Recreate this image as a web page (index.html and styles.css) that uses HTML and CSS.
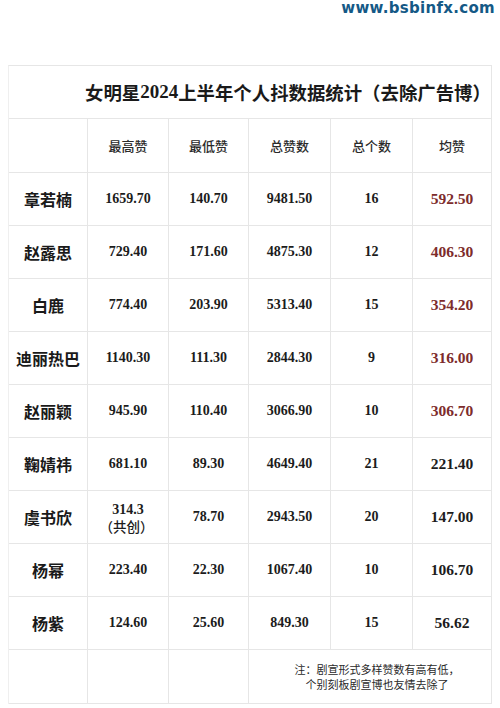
FILE: index.html
```html
<!DOCTYPE html>
<html lang="zh">
<head>
<meta charset="utf-8">
<link rel="stylesheet" href="styles.css">
</head>
<body>
<div class="top">
  <div class="mark">www.bsbinfx.com</div>
</div>
<div class="table">
  <div class="title">女明星<span class="num">2024</span>上半年个人抖数据统计（去除广告博）</div>
  <div class="c"></div>
  <div class="c h">最高赞</div>
  <div class="c h">最低赞</div>
  <div class="c h">总赞数</div>
  <div class="c h">总个数</div>
  <div class="c h">均赞</div>

  <div class="c n">章若楠</div><div class="c v">1659.70</div><div class="c v">140.70</div><div class="c v">9481.50</div><div class="c v">16</div><div class="c a red">592.50</div>
  <div class="c n">赵露思</div><div class="c v">729.40</div><div class="c v">171.60</div><div class="c v">4875.30</div><div class="c v">12</div><div class="c a red">406.30</div>
  <div class="c n">白鹿</div><div class="c v">774.40</div><div class="c v">203.90</div><div class="c v">5313.40</div><div class="c v">15</div><div class="c a red">354.20</div>
  <div class="c n">迪丽热巴</div><div class="c v">1140.30</div><div class="c v">111.30</div><div class="c v">2844.30</div><div class="c v">9</div><div class="c a red">316.00</div>
  <div class="c n">赵丽颖</div><div class="c v">945.90</div><div class="c v">110.40</div><div class="c v">3066.90</div><div class="c v">10</div><div class="c a red">306.70</div>
  <div class="c n">鞠婧祎</div><div class="c v">681.10</div><div class="c v">89.30</div><div class="c v">4649.40</div><div class="c v">21</div><div class="c a">221.40</div>
  <div class="c n">虞书欣</div><div class="c v two"><span>314.3</span><span class="co">（共创）</span></div><div class="c v">78.70</div><div class="c v">2943.50</div><div class="c v">20</div><div class="c a">147.00</div>
  <div class="c n">杨幂</div><div class="c v">223.40</div><div class="c v">22.30</div><div class="c v">1067.40</div><div class="c v">10</div><div class="c a">106.70</div>
  <div class="c n">杨紫</div><div class="c v">124.60</div><div class="c v">25.60</div><div class="c v">849.30</div><div class="c v">15</div><div class="c a">56.62</div>

  <div class="c"></div><div class="c"></div><div class="c"></div>
  <div class="c note"><span class="nl">注：剧宣形式多样赞数有高有低，</span><span class="nl">个别刻板剧宣博也友情去除了</span></div>
</div>
</body>
</html>
```
FILE: styles.css
```css
html, body {
  margin: 0;
  padding: 0;
  background: #fff;
}
body {
  width: 500px;
  height: 708px;
  overflow: hidden;
  font-family: "Noto Sans CJK SC", sans-serif;
  color: #1e1e1e;
}
.top {
  height: 65px;
  display: flex;
  justify-content: flex-end;
  align-items: flex-start;
}
.mark {
  font-family: "DejaVu Sans", sans-serif;
  font-weight: bold;
  font-size: 15px;
  line-height: 16px;
  color: #145986;
  padding-right: 5px;
  letter-spacing: 0.3px;
}
.table {
  margin-left: 8px;
  width: 483px;
  display: grid;
  grid-template-columns: 79px 81px 80px 82px 82px 79px;
  grid-template-rows: 53px 54px repeat(9, 53px) 54px;
  border-top: 1px solid #e6e6e6;
  border-left: 1px solid #efefef;
}
.title {
  grid-column: 1 / 7;
  border-right: 1px solid #e6e6e6;
  border-bottom: 1px solid #e6e6e6;
  display: flex;
  align-items: center;
  padding-left: 76px;
  font-size: 18.4px;
  font-weight: bold;
  color: #1a1a1a;
  white-space: nowrap;
  overflow: hidden;
}
.title .num {
  font-family: "Liberation Serif", serif;
  font-weight: bold;
  font-size: 19px;
}
.c {
  border-right: 1px solid #e6e6e6;
  border-bottom: 1px solid #e6e6e6;
  display: flex;
  align-items: center;
  justify-content: center;
  text-align: center;
}
.h {
  font-size: 13px;
  color: #2a2a2a;
  font-weight: 500;
}
.n {
  font-size: 16px;
  font-weight: bold;
  color: #1a1a1a;
}
.v {
  font-family: "Liberation Serif", serif;
  font-weight: bold;
  font-size: 14px;
  color: #1c1c1c;
}
.a {
  font-family: "Liberation Serif", serif;
  font-weight: bold;
  font-size: 15.5px;
  color: #1c1c1c;
}
.a.red {
  color: #7d2c2c;
}
.two {
  flex-direction: column;
  line-height: 17px;
  padding-top: 2px;
}
.co {
  font-family: "Noto Sans CJK SC", sans-serif;
  font-weight: 500;
  font-size: 13.5px;
  margin-left: -3px;
}
.note {
  grid-column: 4 / 7;
  flex-direction: column;
  font-size: 11px;
  color: #2a2a2a;
  padding-left: 14px;
}
.nl {
  display: block;
  line-height: 15px;
  white-space: nowrap;
}
```
